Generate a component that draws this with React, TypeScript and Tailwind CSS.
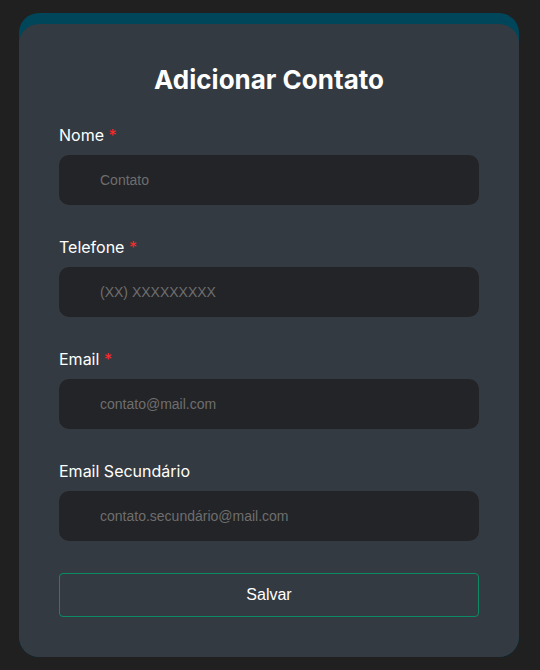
import React from "react";

const fields = [
  { id: "nome", label: "Nome", placeholder: "Contato", required: true },
  { id: "telefone", label: "Telefone", placeholder: "(XX) XXXXXXXXX", required: true },
  { id: "email", label: "Email", placeholder: "contato@mail.com", required: true },
  { id: "email2", label: "Email Secundário", placeholder: "contato.secundário@mail.com", required: false },
];

const App = () => {
  return (
    <div className="min-h-[670px] bg-[#202020] pt-[13px] px-[19px] pb-[13px] font-['Inter',sans-serif]">
      <div className="w-[500px] bg-[#00465a] rounded-[20px] pt-[11px] overflow-hidden">
        <div className="bg-[#343a41] rounded-[20px] px-10 pt-10 pb-10">
          <h1 className="text-[26px] leading-8 font-bold text-white text-center mb-[27px]">
            Adicionar Contato
          </h1>
          <form className="flex flex-col gap-[30px]">
            {fields.map((f) => (
              <div key={f.id}>
                <label htmlFor={f.id} className="block text-base leading-6 font-normal text-white mb-2">
                  {f.label}
                  {f.required && <span className="text-[#ff2a2a]"> *</span>}
                </label>
                <input
                  id={f.id}
                  placeholder={f.placeholder}
                  className="w-full h-[50px] rounded-[10px] bg-[#232427] pl-[41px] pr-4 text-sm font-['Liberation_Sans',Arial,sans-serif] text-white placeholder:text-[#6e6e6e] outline-none"
                />
              </div>
            ))}
          </form>
          <button
            type="submit"
            className="mt-8 w-full h-11 rounded-[4px] border border-[#0c8a63] text-white text-base font-['Liberation_Sans',Arial,sans-serif]"
          >
            Salvar
          </button>
        </div>
      </div>
    </div>
  );
};

export default App;
